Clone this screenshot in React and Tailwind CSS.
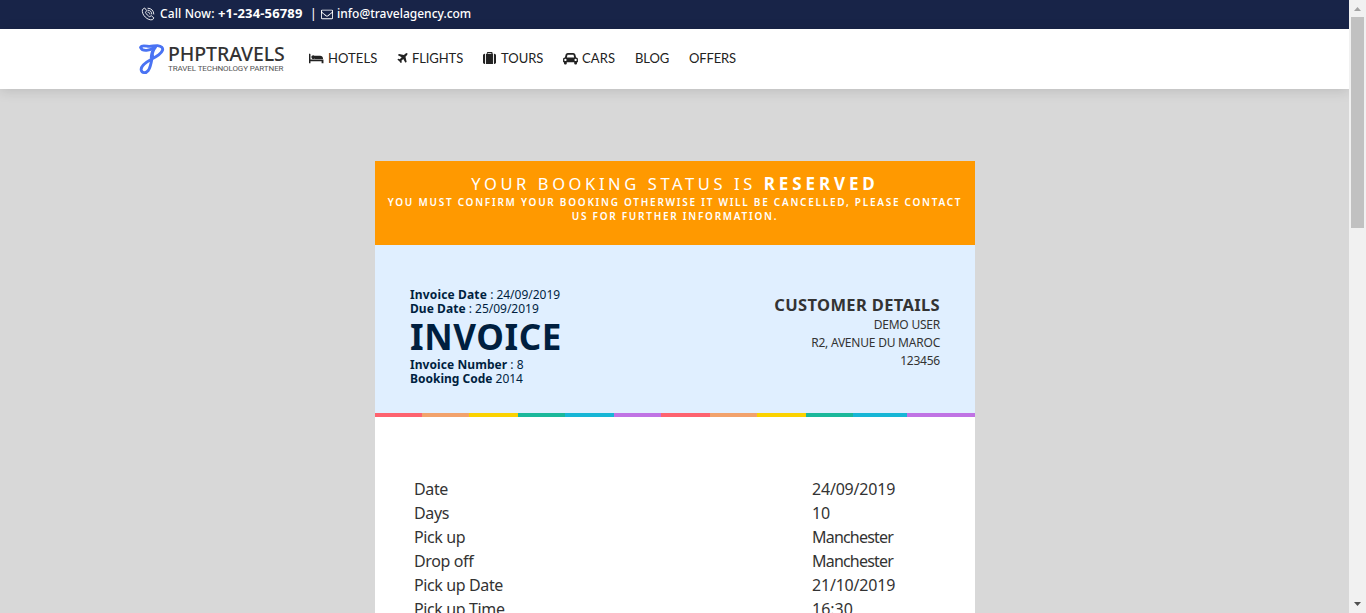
import React from "react";

const ICONS = {
  bed: ["0 0 2048 1792", "M256 1024h1664q26 0 45 19t19 45v448h-256v-256h-1536v256h-256v-1216q0-26 19-45t45-19h128q26 0 45 19t19 45v704zm576-320q0-106-75-181t-181-75-181 75-75 181 75 181 181 75 181-75 75-181zm1088 256v-64q0-159-112.5-271.5t-271.5-112.5h-704q-26 0-45 19t-19 45v384h1152z"],
  plane: ["128 0 1536 1792", "M1568 160q44 52 12 148t-108 172l-161 161 160 696q5 19-12 33l-128 96q-7 6-19 6-4 0-7-1-15-3-21-14l-279-508-259 259 53 194q5 17-8 31l-96 96q-9 9-23 9h-2q-15-2-24-13l-189-252-252-189q-11-7-13-23-1-13 9-25l96-97q9-9 23-9 6 0 8 1l194 53 259-259-508-279q-14-8-17-24-2-16 9-27l128-128q14-13 30-8l665 159 160-160q76-76 172-108t148 12z"],
  suitcase: ["0 0 1792 1792", "M640 256h512v-128h-512v128zm-352 0v1408h-64q-92 0-158-66t-66-158v-960q0-92 66-158t158-66h64zm1088 0v1408h-960v-1408h128v-160q0-40 28-68t68-28h576q40 0 68 28t28 68v160h128zm416 224v960q0 92-66 158t-158 66h-64v-1408h64q92 0 158 66t66 158z"],
  car: ["0 0 2048 1792", "M480 1088q0-66-47-113t-113-47-113 47-47 113 47 113 113 47 113-47 47-113zm36-320h1016l-89-357q-2-8-14-17.5t-21-9.5h-768q-9 0-21 9.5t-14 17.5zm1372 320q0-66-47-113t-113-47-113 47-47 113 47 113 113 47 113-47 47-113zm160-96v384q0 14-9 23t-23 9h-96v128q0 80-56 136t-136 56-136-56-56-136v-128h-1024v128q0 80-56 136t-136 56-136-56-56-136v-128h-96q-14 0-23-9t-9-23v-384q0-93 65.5-158.5t158.5-65.5h28l105-419q23-94 104-157.5t179-63.5h768q98 0 179 63.5t104 157.5l105 419h28q93 0 158.5 65.5t65.5 158.5z"],
  envelope: ["0 0 1792 1792", "M1664 1504v-768q-32 36-69 66-268 206-426 338-51 43-83 67t-86.5 48.5-102.5 24.5h-2q-48 0-102.5-24.5t-86.5-48.5-83-67q-158-132-426-338-37-30-69-66v768q0 13 9.5 22.5t22.5 9.5h1472q13 0 22.5-9.5t9.5-22.5zm0-1051v-24.5l-.5-13-3-12.5-5.5-9-9-7.5-14-2.5h-1472q-13 0-22.5 9.5t-9.5 22.5q0 168 147 284 193 152 401 317 6 5 35 29.5t46 37.5 44.5 31.5 50.5 27.5 43 9h2q20 0 43-9t50.5-27.5 44.5-31.5 46-37.5 35-29.5q208-165 401-317 54-43 100.5-115.5t46.5-131.5zm128-37v1088q0 66-47 113t-113 47h-1472q-66 0-113-47t-47-113v-1088q0-66 47-113t113-47h1472q66 0 113 47t47 113z"],
};

function Icon({ name, className }) {
  const [box, d] = ICONS[name];
  return <svg viewBox={box} className={"shrink-0 " + className} fill="currentColor"><path d={d} /></svg>;
}

const DETAILS = [
  ["Date", "24/09/2019", "tracking-[-0.2px]"],
  ["Days", "10", "tracking-[-0.2px]"],
  ["Pick up", "Manchester", "tracking-[-0.8px]"],
  ["Drop off", "Manchester", "tracking-[-0.8px]"],
  ["Pick up Date", "21/10/2019", "tracking-[-0.2px]"],
  ["Pick up Time", "16:30", "tracking-[0px]"],
];

const STRIPES = [
  "w-[47px] bg-[#fe636f]",
  "w-[47px] bg-[#f2a26c]",
  "w-[49px] bg-[#fbd200]",
  "w-[47px] bg-[#1bb89b]",
  "w-[49px] bg-[#17b6d6]",
  "w-[47px] bg-[#c073e4]",
  "w-[49px] bg-[#fe636f]",
  "w-[47px] bg-[#f2a26c]",
  "w-[49px] bg-[#fbd200]",
  "w-[47px] bg-[#1bb89b]",
  "w-[54px] bg-[#17b6d6]",
  "w-[68px] bg-[#c073e4]",
];

function TopBar() {
  return (
    <div className="flex h-[29px] items-center bg-[#182448] pb-[2px] pl-[141px] font-['Noto_Sans',sans-serif] text-[12px] font-medium whitespace-nowrap text-white">
      <svg viewBox="0 0 14 14" className="size-[14px] shrink-0" fill="none" stroke="currentColor" strokeWidth="0.9" strokeLinejoin="round" strokeLinecap="round">
        <path d="M3.3 1.2L1.4 2.6C1 5.2 2 7.8 4.2 10C6.4 12.2 9 13.2 11.5 12.7L12.9 10.9L10.3 8.7L8.7 9.7C7 9 5.2 7.2 4.5 5.4L5.5 3.9Z" />
        <path d="M7 1.2C10.3 1.3 12.7 3.7 12.8 7M7 3.2C9.2 3.3 10.7 4.8 10.8 7M7 5.2C8.2 5.3 8.7 5.8 8.8 7" />
      </svg>
      <span className="ml-[5px] w-[58px] tracking-[0.12px]">Call Now:</span>
      <span className="w-[92px] text-[13px] font-bold tracking-[0.15px]">+1-234-56789</span>
      <span className="w-[11px]">|</span>
      <Icon name="envelope" className="size-[12px]" />
      <span className="ml-[4px]">info@travelagency.com</span>
    </div>
  );
}

function Logo() {
  return (
    <div className="flex w-[170px] items-center">
      <svg viewBox="0 0 26 32" className="h-[32px] w-[26px] shrink-0" fill="none" stroke="#4a73f3" strokeLinecap="round" strokeLinejoin="round">
        <path d="M1.9 4.2C2.5 2.4 5 2.6 8 3.2C12 4 15 2.4 18.5 2.6C22.5 3 24.4 5 23.4 7.6C22 11.5 17 14 12 16.5C6.500 19.500 1.500 23 2.200 27C2.800 30.300 6.800 30.600 9.300 27.500C11.800 24 12.400 18.500 13.500 12.500" strokeWidth="2.9" />
        <path d="M1.6 4.6C3.500 9 11 7.600 16 4.200" strokeWidth="2.7" />
        <path d="M16.200 4.200C13.800 7 12.900 10 12.500 14.500" strokeWidth="3.4" />
      </svg>
      <div className="ml-[3px] flex flex-col whitespace-nowrap">
        <span className="h-[19px] font-['Noto_Sans',sans-serif] text-[19.5px] leading-[18px] font-medium tracking-[-0.1px] text-[#333]">PHPTRAVELS</span>
        <span className="h-[9px] font-['Roboto',sans-serif] text-[8px] leading-[9px] tracking-[-0.1px] text-[#555]">TRAVEL TECHNOLOGY PARTNER</span>
      </div>
    </div>
  );
}

function NavBar() {
  return (
    <header className="relative flex h-[60px] items-center bg-white pl-[139px] font-['Lato',sans-serif] text-[13px] text-[#222] shadow-[0_2px_12px_rgba(0,0,0,0.13)]">
      <Logo />
      <nav className="flex items-center whitespace-nowrap">
        <a className="flex w-[88px] items-center gap-[4px] tracking-[0.08px]"><Icon name="bed" className="mb-[2px] h-[13px] w-[15px]" />HOTELS</a>
        <a className="flex w-[86px] items-center gap-[4px] tracking-[-0.1px]"><Icon name="plane" className="mb-[2px] h-[13px] w-[11px]" />FLIGHTS</a>
        <a className="flex w-[80px] items-center gap-[5px] tracking-[0px]"><Icon name="suitcase" className="mb-[2px] size-[13px]" />TOURS</a>
        <a className="flex w-[72px] items-center gap-[4px] tracking-[0.1px]"><Icon name="car" className="mb-[2px] h-[13px] w-[15px]" />CARS</a>
        <a className="w-[54px] tracking-[-0.1px]">BLOG</a>
        <a className="tracking-[-0.15px]">OFFERS</a>
      </nav>
    </header>
  );
}

function StatusBanner() {
  return (
    <div className="h-[84px] bg-[#ff9900] pt-[12px] text-center whitespace-nowrap text-white">
      <div className="h-[22px] text-[16.5px] leading-[22px] tracking-[3.6px]">
        YOUR BOOKING STATUS IS <b className="text-[17px] tracking-[3.9px]">RESERVED</b>
      </div>
      <div className="text-[10px] leading-[14px] font-semibold tracking-[1.74px]">
        <div>YOU MUST CONFIRM YOUR BOOKING OTHERWISE IT WILL BE CANCELLED, PLEASE CONTACT</div>
        <div>US FOR FURTHER INFORMATION.</div>
      </div>
    </div>
  );
}

function InvoiceHead() {
  return (
    <div className="flex h-[168px] justify-between bg-[#e0efff] px-[35px] whitespace-nowrap">
      <div className="pt-[43px] text-[12px] leading-[14px] tracking-[-0.02px] text-[#001f3f]">
        <div><b className="tracking-[0.15px]">Invoice Date</b> : 24/09/2019</div>
        <div><b className="tracking-[0.06px]">Due Date</b> : 25/09/2019</div>
        <div className="h-[42px] text-[35px] leading-[42px] font-bold tracking-[0.6px]">INVOICE</div>
        <div><b className="tracking-[0.07px]">Invoice Number</b> : 8</div>
        <div><b className="tracking-[0px]">Booking Code</b> 2014</div>
      </div>
      <div className="pt-[48px] text-right text-[12px] leading-[18px] tracking-[-0.22px] text-[#333]">
        <div className="h-[23px] text-[16.5px] leading-[23px] font-bold tracking-[0.35px]">CUSTOMER DETAILS</div>
        <div>DEMO USER</div>
        <div>R2, AVENUE DU MAROC</div>
        <div>123456</div>
      </div>
    </div>
  );
}

function ScrollBar() {
  return (
    <div className="flex w-[17px] shrink-0 flex-col items-center justify-between bg-[#f1f1f1]">
      <div className="flex flex-col items-center">
        <svg viewBox="0 0 7 4" className="mt-[7px] h-[4px] w-[7px]" fill="#a3a3a3"><path d="M0 4L3.5 0L7 4Z" /></svg>
        <div className="mt-[6px] h-[211px] w-[13px] bg-[#c1c1c1]" />
      </div>
      <svg viewBox="0 0 7 4" className="mb-[7px] h-[4px] w-[7px]" fill="#505050"><path d="M0 0L3.5 4L7 0Z" /></svg>
    </div>
  );
}

export default function App() {
  return (
    <div className="flex h-[613px] w-[1366px] overflow-hidden bg-[#d8d8d8]">
      <div className="min-w-0 flex-1 overflow-hidden">
        <TopBar />
        <NavBar />
        <main className="ml-[375px] mt-[72px] min-h-[452px] w-[600px] bg-white font-['Noto_Sans',sans-serif]">
          <StatusBanner />
          <InvoiceHead />
          <div className="flex h-[4px]">
            {STRIPES.map((s, i) => <div key={i} className={s} />)}
          </div>
          <div className="pt-[60px] pl-[39px] text-[16px] leading-[24px] text-[#333]">
            {DETAILS.map(([label, value, spacing]) => (
              <div key={label} className="flex h-[24px]">
                <span className="w-[398px] tracking-[-0.38px]">{label}</span>
                <span className={spacing}>{value}</span>
              </div>
            ))}
          </div>
        </main>
      </div>
      <ScrollBar />
    </div>
  );
}
